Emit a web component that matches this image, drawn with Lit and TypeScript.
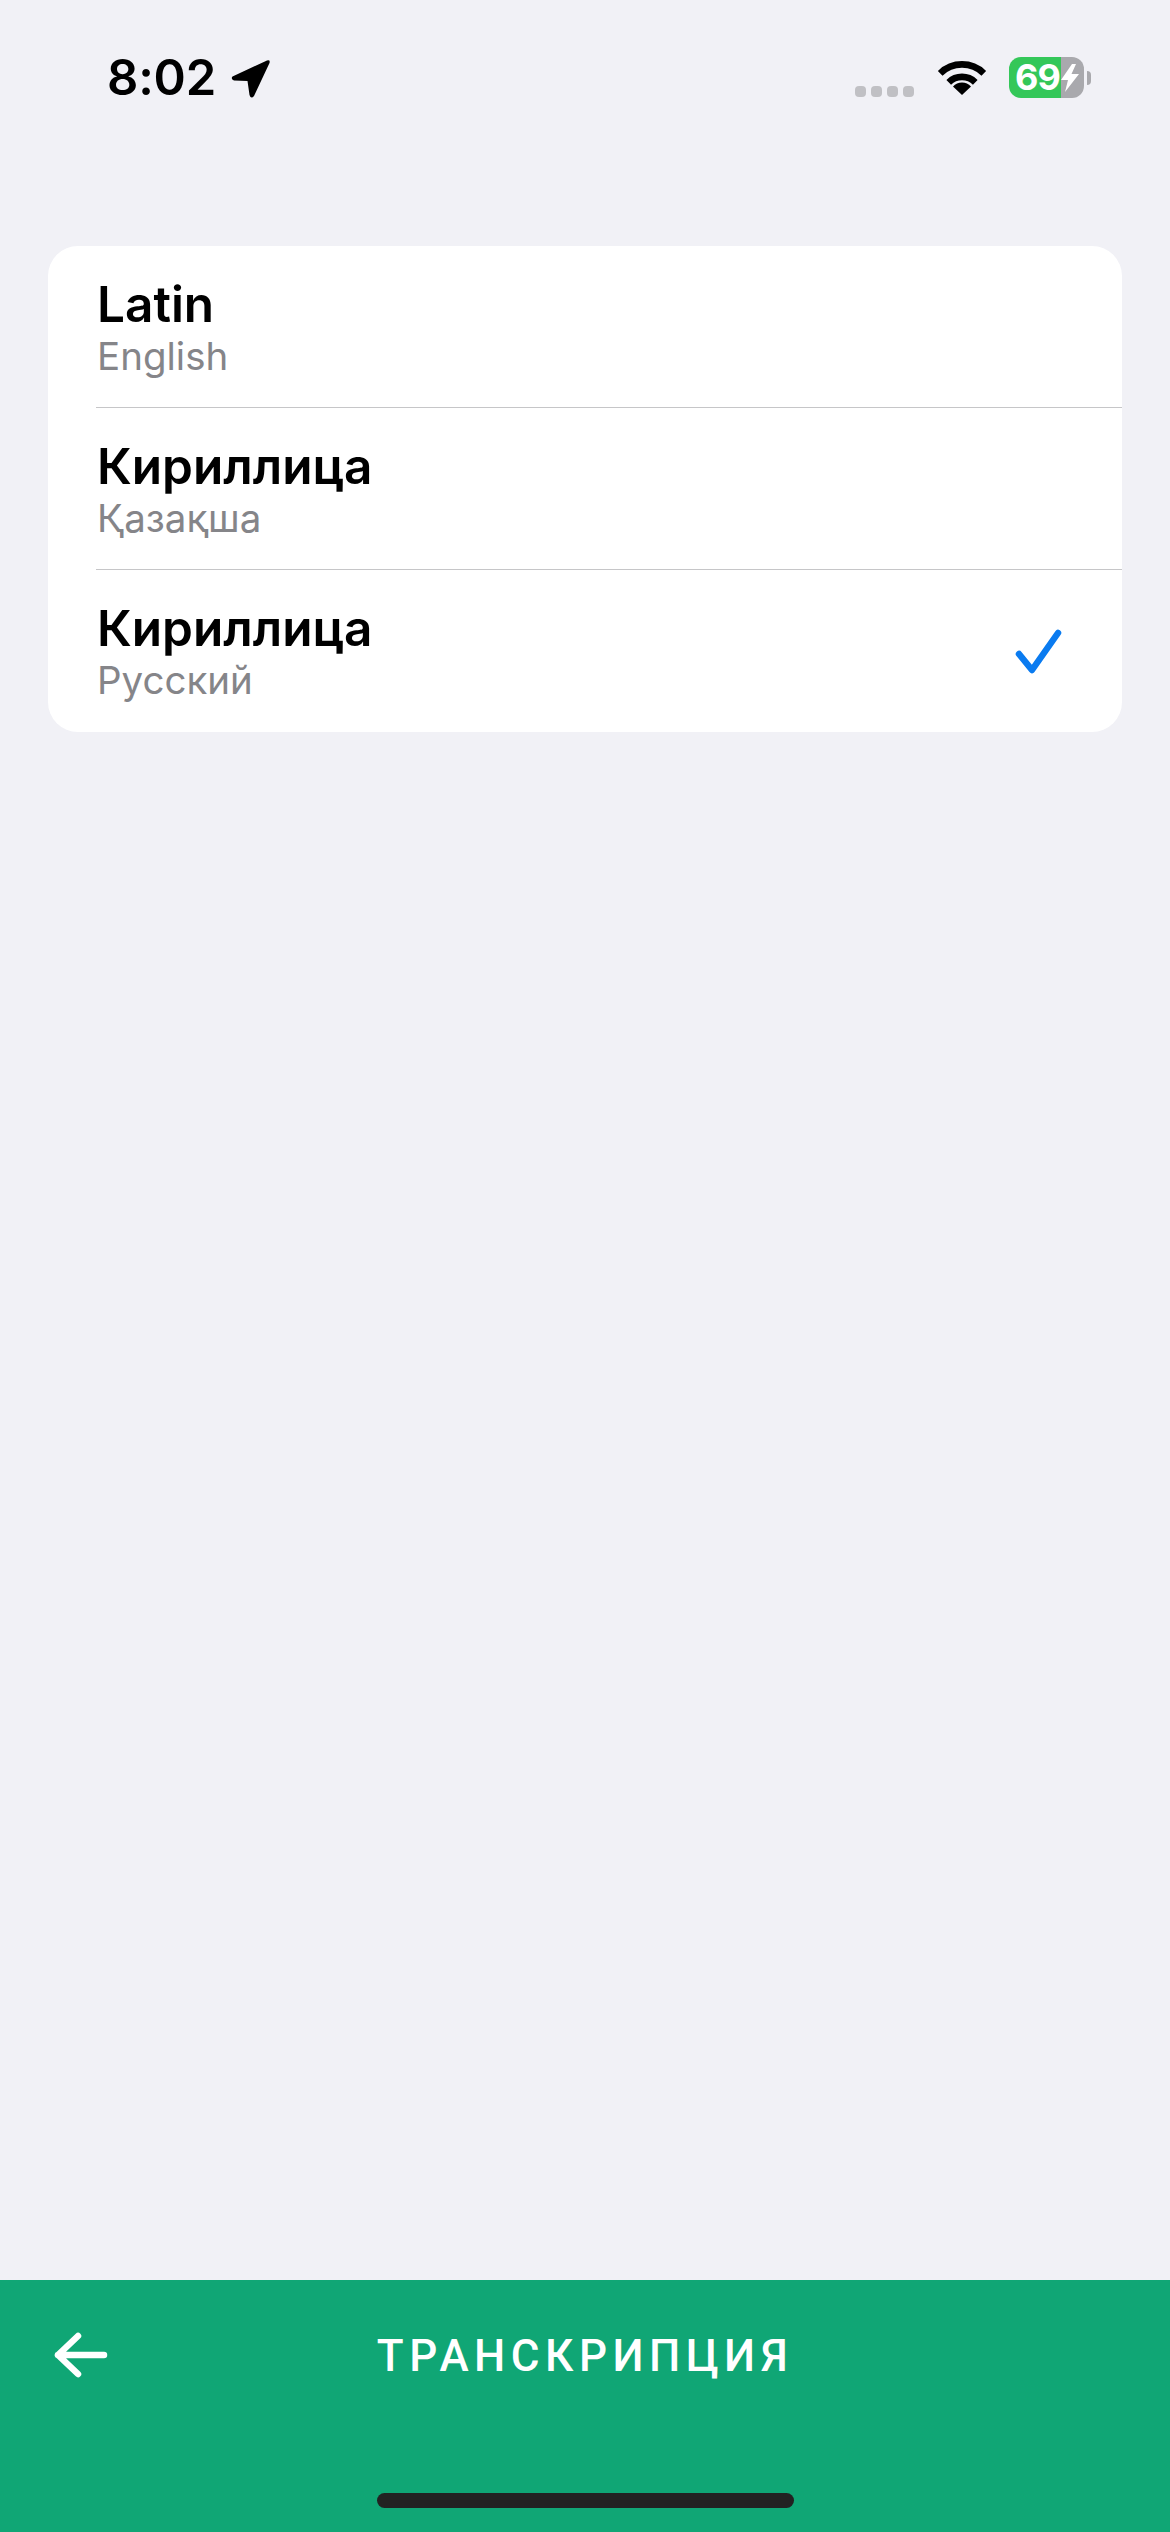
import { LitElement, html, css } from "lit";
import { customElement } from "lit/decorators.js";

const rows = [
  { title: "Latin", sub: "English", checked: false },
  { title: "Кириллица", sub: "Қазақша", checked: false },
  { title: "Кириллица", sub: "Русский", checked: true },
];

@customElement("app-root")
export class AppRoot extends LitElement {
  static styles = css`
    :host {
      display: flex;
      flex-direction: column;
      width: 1170px;
      height: 2532px;
      background: #f1f1f6;
      font-family: Inter, "Noto Sans", sans-serif;
      overflow: hidden;
    }
    .status {
      height: 246px;
      box-sizing: border-box;
      flex: none;
      display: flex;
      align-items: flex-start;
      padding: 50px 0 0 107px;
    }
    .time {
      font-size: 49px;
      line-height: 56px;
      font-weight: 600;
      color: #000;
      letter-spacing: -0.2px;
    }
    .arrow { width: 42px; height: 42px; margin: 7px 0 0 14px; }
    .right {
      margin-left: auto;
      display: flex;
      align-items: center;
      height: 41px;
      margin-top: 7px;
      padding-right: 79px;
    }
    .dots { display: flex; gap: 5px; margin-top: 27px; }
    .dots i { width: 11px; height: 11px; border-radius: 4px; background: #c0c0c4; display: block; }
    .wifi { width: 50px; height: 36px; margin: 0 0 0 23px; }
    .battery {
      position: relative;
      width: 75px;
      height: 41px;
      margin-left: 22px;
      box-sizing: border-box;
      border-radius: 12px;
      background: linear-gradient(90deg, #34c759 0 69%, #a9a9ad 69% 100%);
      color: #fff;
      font-size: 36px;
      line-height: 41px;
      font-weight: 700;
      padding-left: 6px;
      letter-spacing: -1px;
    }
    .bolt { position: absolute; left: 52px; top: 7px; width: 18px; height: 28px; }
    .nub {
      width: 4px;
      height: 14px;
      margin-left: 3px;
      border-radius: 0 7px 7px 0;
      background: #a9a9ad;
    }
    .card {
      flex: none;
      margin: 0 48px;
      background: #fff;
      border-radius: 30px;
      overflow: hidden;
    }
    .row {
      height: 161px;
      box-sizing: border-box;
      display: flex;
      align-items: center;
      justify-content: space-between;
      padding: 0 59px 0 49px;
    }
    .row + .row { height: 162px; border-top: 1px solid #c6c6c8; margin-left: 48px; padding-left: 1px; }
    .row:last-child { height: 163px; }
    .texts { display: flex; flex-direction: column; }
    .title { font-size: 49.500px; line-height: 58px; font-weight: 600; color: #000; }
    .sub { font-size: 38.500px; line-height: 46px; font-weight: 400; color: #858589; }
    .check { width: 50px; height: 48px; }
    .spacer { flex: 1; }
    .footer {
      flex: none;
      height: 252px;
      background: #10a675;
      box-sizing: border-box;
      position: relative;
      display: flex;
      flex-direction: column;
      align-items: center;
    }
    .back { position: absolute; left: 53px; top: 50px; width: 56px; height: 50px; }
    .label {
      margin-top: 50px;
      font-family: Roboto, Inter, sans-serif;
      font-size: 44px;
      line-height: 52px;
      font-weight: 500;
      color: #fff;
      letter-spacing: 5.500px;
    }
    .home {
      margin-top: 111px;
      width: 417px;
      height: 15px;
      border-radius: 8px;
      background: #222;
    }
  `;

  render() {
    return html`
      <div class="status">
        <span class="time">8:02</span>
        <svg class="arrow" viewBox="0 0 42 42">
          <path d="M2.500 19.500 L37 3.500 Q40.500 2.500 39.500 6 L24 39 Q21 42.500 19.500 38 L17.500 24 L4 23.500 Q0.500 22 2.500 19.500Z" fill="#000"/>
        </svg>
        <div class="right">
          <div class="dots"><i></i><i></i><i></i><i></i></div>
          <svg class="wifi" viewBox="0 0 52 38">
            <path d="M3 14 A33 33 0 0 1 49 14" fill="none" stroke="#000" stroke-width="7"/>
            <path d="M12 23.500 A20 20 0 0 1 40 23.500" fill="none" stroke="#000" stroke-width="7"/>
            <path d="M26 37 L16.500 28 A13 13 0 0 1 35.500 28 Z" fill="#000"/>
          </svg>
          <div class="battery">69
            <svg class="bolt" viewBox="0 0 18 28">
              <path d="M11 0 L0 16 H7 L4 28 L18 10 H10.500 L15 0Z" fill="#fff"/>
            </svg>
          </div>
          <div class="nub"></div>
        </div>
      </div>
      <div class="card">
        ${rows.map(
          (r) => html`
            <div class="row">
              <div class="texts">
                <span class="title">${r.title}</span>
                <span class="sub">${r.sub}</span>
              </div>
              ${r.checked
                ? html`<svg class="check" viewBox="0 0 50 48">
                    <path d="M6 27 L19 43 L45 6" fill="none" stroke="#0a7bf0" stroke-width="6.500" stroke-linecap="round" stroke-linejoin="round"/>
                  </svg>`
                : ""}
            </div>
          `
        )}
      </div>
      <div class="spacer"></div>
      <div class="footer">
        <svg class="back" viewBox="0 0 56 50">
          <path d="M5 25 H51 M25 6 L5 25 L25 44" fill="none" stroke="#fff" stroke-width="6.500" stroke-linecap="round" stroke-linejoin="round"/>
        </svg>
        <span class="label">ТРАНСКРИПЦИЯ</span>
        <div class="home"></div>
      </div>
    `;
  }
}
